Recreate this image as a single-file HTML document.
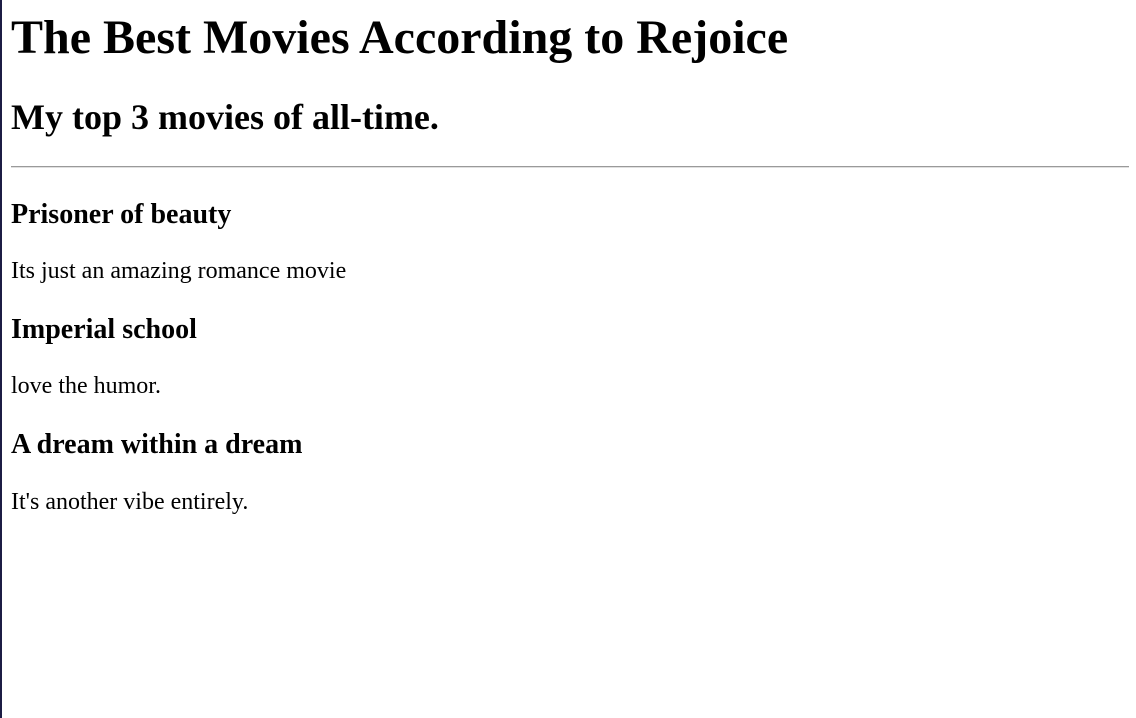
<!DOCTYPE html>
<html><head><meta charset="utf-8"><style>
html,body{margin:0;padding:0;background:#fff;width:1136px;height:718px;overflow:hidden}
body{position:relative;font-family:"Liberation Serif",serif;color:#000}
.b{position:absolute;left:0;top:0;width:2px;height:718px;background:#1c1c44}
.t{position:absolute;left:11px;margin:0;line-height:1.15;white-space:nowrap}
h1.t{font-size:48px;font-weight:bold}
h2.t{font-size:36px;font-weight:bold}
h3.t{font-size:28px;font-weight:bold}
p.t{font-size:24px}
.hr{position:absolute;left:11px;top:166px;width:1118px;height:1px;background:#9a9a9a;border-bottom:1px solid #e0e0e0}
</style></head><body>
<div class="b"></div>
<h1 class="t" style="top:10px">The Best Movies According to Rejoice</h1>
<h2 class="t" style="top:97px">My top 3 movies of all-time.</h2>
<div class="hr"></div>
<h3 class="t" style="top:199px">Prisoner of beauty</h3>
<p class="t" style="top:258px">Its just an amazing romance movie</p>
<h3 class="t" style="top:314px">Imperial school</h3>
<p class="t" style="top:373px">love the humor.</p>
<h3 class="t" style="top:429px">A dream within a dream</h3>
<p class="t" style="top:489px">It's another vibe entirely.</p>
</body></html>
